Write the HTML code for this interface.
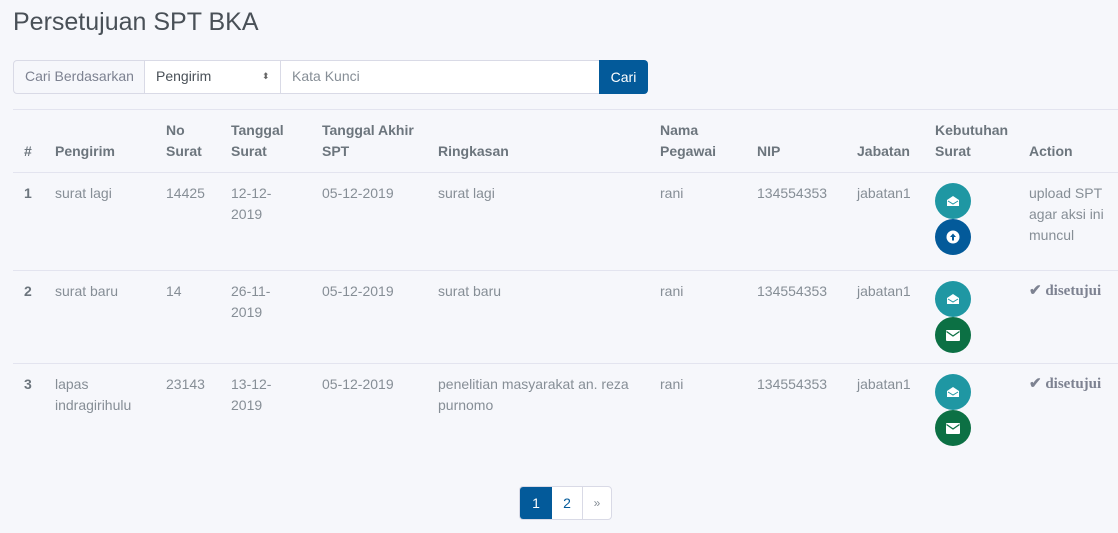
<!DOCTYPE html>
<html><head><meta charset="utf-8"><style>
body{margin:0;width:1118px;height:533px;background:#f6f7fb;font-family:"Liberation Sans",sans-serif;color:#868e96;font-size:14px;position:relative;overflow:hidden}
.a{position:absolute;line-height:21px;white-space:nowrap}
h1{position:absolute;left:13px;top:8px;margin:0;font-weight:400;font-size:25px;color:#495057}
.hd{font-weight:bold;color:#6c757d}
.line{position:absolute;left:13px;right:0;height:1px;background:#e3e4ef}
.c{position:absolute;width:36px;height:36px;border-radius:50%;display:flex;align-items:center;justify-content:center}
.t{background:#1f97a3}.b{background:#035a9a}.g{background:#0c7044}
.ok{font-family:"Liberation Serif",serif;font-weight:bold;color:#7d8291;font-size:15px}
</style></head><body>
<h1>Persetujuan SPT BKA</h1>
<div style="position:absolute;left:13px;top:60px;width:131px;height:32px;border:1px solid #d9dae6;border-radius:4px 0 0 4px;background:#f6f7fb"></div>
<div class="a" style="left:25px;top:66px;color:#7d8291">Cari Berdasarkan</div>
<div style="position:absolute;left:144px;top:60px;width:454px;height:32px;border:1px solid #d9dae6;border-left:1px solid #d9dae6;background:#fff"></div>
<div style="position:absolute;left:280px;top:61px;width:1px;height:32px;background:#d9dae6"></div>
<div class="a" style="left:156px;top:66px;color:#495057">Pengirim</div>
<div class="a" style="left:262px;top:66px;font-size:9px;color:#666">⬍</div>
<div class="a" style="left:292px;top:66px;color:#868e96">Kata Kunci</div>
<div style="position:absolute;left:599px;top:60px;width:49px;height:34px;background:#035a9a;border-radius:0 4px 4px 0;color:#fff;line-height:34px;text-align:center">Cari</div>
<div class="line" style="top:109px"></div>
<div class="line" style="top:172px"></div>
<div class="line" style="top:270px"></div>
<div class="line" style="top:363px"></div>
<div class="a hd" style="left:24px;top:141px">#</div>
<div class="a hd" style="left:55px;top:141px">Pengirim</div>
<div class="a hd" style="left:166px;top:120px">No<br>Surat</div>
<div class="a hd" style="left:231px;top:120px">Tanggal<br>Surat</div>
<div class="a hd" style="left:322px;top:120px">Tanggal Akhir<br>SPT</div>
<div class="a hd" style="left:438px;top:141px">Ringkasan</div>
<div class="a hd" style="left:660px;top:120px">Nama<br>Pegawai</div>
<div class="a hd" style="left:757px;top:141px">NIP</div>
<div class="a hd" style="left:857px;top:141px">Jabatan</div>
<div class="a hd" style="left:935px;top:120px">Kebutuhan<br>Surat</div>
<div class="a hd" style="left:1029px;top:141px">Action</div>

<div class="a hd" style="left:24px;top:183px">1</div>
<div class="a" style="left:55px;top:183px">surat lagi</div>
<div class="a" style="left:166px;top:183px">14425</div>
<div class="a" style="left:231px;top:183px">12-12-<br>2019</div>
<div class="a" style="left:322px;top:183px">05-12-2019</div>
<div class="a" style="left:438px;top:183px">surat lagi</div>
<div class="a" style="left:660px;top:183px">rani</div>
<div class="a" style="left:757px;top:183px">134554353</div>
<div class="a" style="left:857px;top:183px">jabatan1</div>
<div class="a" style="left:1029px;top:183px">upload SPT<br>agar aksi ini<br>muncul</div>

<div class="a hd" style="left:24px;top:281px">2</div>
<div class="a" style="left:55px;top:281px">surat baru</div>
<div class="a" style="left:166px;top:281px">14</div>
<div class="a" style="left:231px;top:281px">26-11-<br>2019</div>
<div class="a" style="left:322px;top:281px">05-12-2019</div>
<div class="a" style="left:438px;top:281px">surat baru</div>
<div class="a" style="left:660px;top:281px">rani</div>
<div class="a" style="left:757px;top:281px">134554353</div>
<div class="a" style="left:857px;top:281px">jabatan1</div>
<div class="a ok" style="left:1029px;top:281px">✔ disetujui</div>

<div class="a hd" style="left:24px;top:374px">3</div>
<div class="a" style="left:55px;top:374px">lapas<br>indragirihulu</div>
<div class="a" style="left:166px;top:374px">23143</div>
<div class="a" style="left:231px;top:374px">13-12-<br>2019</div>
<div class="a" style="left:322px;top:374px">05-12-2019</div>
<div class="a" style="left:438px;top:374px">penelitian masyarakat an. reza<br>purnomo</div>
<div class="a" style="left:660px;top:374px">rani</div>
<div class="a" style="left:757px;top:374px">134554353</div>
<div class="a" style="left:857px;top:374px">jabatan1</div>
<div class="a ok" style="left:1029px;top:374px">✔ disetujui</div>

<div class="c t" style="left:935px;top:183px"><svg width="14" height="12" viewBox="0 0 14 12"><path d="M1 5L7 1L13 5V11H1Z" fill="#fff"/><path d="M2 6L7 9L12 6" stroke="#1f97a3" fill="none"/></svg></div>
<div class="c b" style="left:935px;top:219px"><svg width="14" height="14" viewBox="0 0 14 14"><circle cx="7" cy="7" r="6.5" fill="#fff"/><path d="M7 3.5L10 7H8V10.5H6V7H4Z" fill="#035a9a"/></svg></div>
<div class="c t" style="left:935px;top:281px"><svg width="14" height="12" viewBox="0 0 14 12"><path d="M1 5L7 1L13 5V11H1Z" fill="#fff"/><path d="M2 6L7 9L12 6" stroke="#1f97a3" fill="none"/></svg></div>
<div class="c g" style="left:935px;top:317px"><svg width="14" height="11" viewBox="0 0 14 11"><rect x="0" y="0" width="14" height="11" rx="1" fill="#fff"/><path d="M0.5 1.5L7 6L13.5 1.5" stroke="#0c7044" fill="none" stroke-width="1.3"/></svg></div>
<div class="c t" style="left:935px;top:374px"><svg width="14" height="12" viewBox="0 0 14 12"><path d="M1 5L7 1L13 5V11H1Z" fill="#fff"/><path d="M2 6L7 9L12 6" stroke="#1f97a3" fill="none"/></svg></div>
<div class="c g" style="left:935px;top:410px"><svg width="14" height="11" viewBox="0 0 14 11"><rect x="0" y="0" width="14" height="11" rx="1" fill="#fff"/><path d="M0.5 1.5L7 6L13.5 1.5" stroke="#0c7044" fill="none" stroke-width="1.3"/></svg></div>

<div style="position:absolute;left:519px;top:486px;width:91px;height:32px;border:1px solid #d9dae6;border-radius:4px;background:#fff;overflow:hidden;display:flex">
<div style="width:32px;background:#035a9a;color:#fff;text-align:center;line-height:32px">1</div>
<div style="width:30px;border-right:1px solid #d9dae6;color:#035a9a;text-align:center;line-height:32px">2</div>
<div style="width:28px;color:#868e96;text-align:center;line-height:32px;font-size:12px">»</div>
</div>
</body></html>
